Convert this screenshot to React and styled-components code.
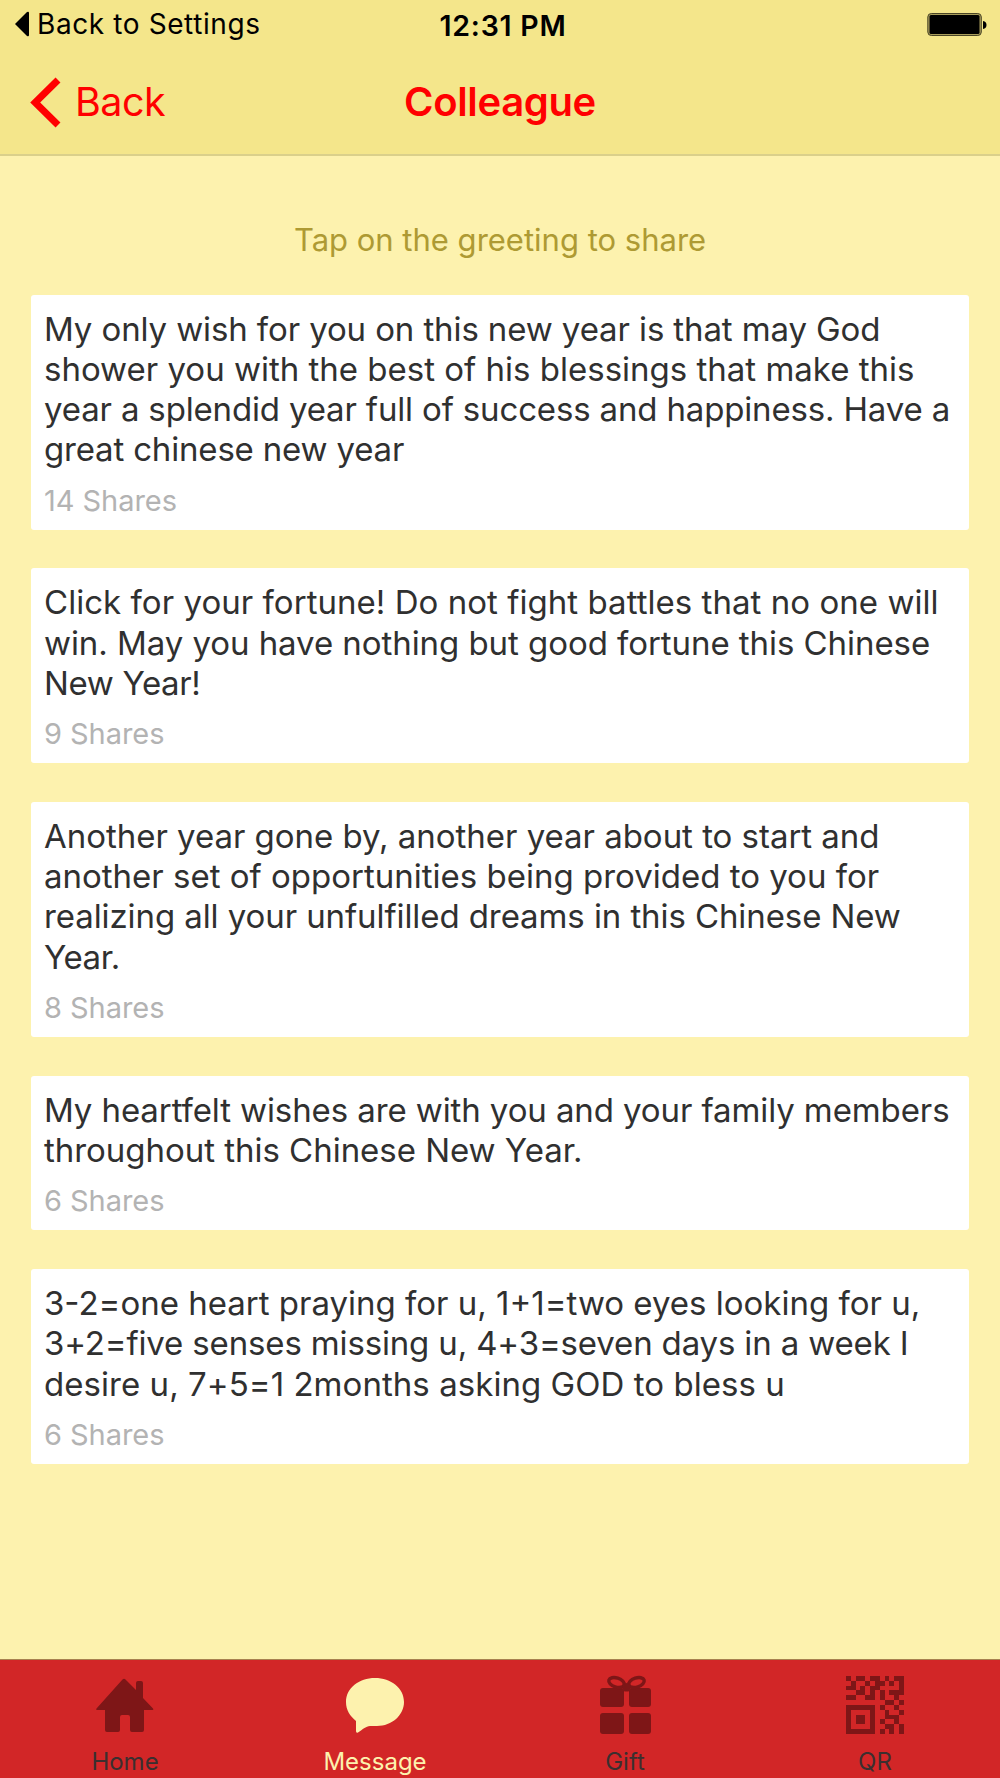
import React from 'react'
import styled, { createGlobalStyle } from 'styled-components'

const GlobalStyle = createGlobalStyle`
  * {
    box-sizing: border-box;
  }
  body {
    margin: 0;
    font-family: Inter, 'Liberation Sans', sans-serif;
    background: #fdf2ae;
  }
`

const Screen = styled.div`
  display: flex;
  flex-direction: column;
  width: 1000px;
  height: 1778px;
  overflow: hidden;
  background: #fdf2ae;
`

const Header = styled.header`
  height: 156px;
  background: #f4e68b;
  border-bottom: 2px solid #dad08b;
`

const StatusBar = styled.div`
  display: grid;
  grid-template-columns: 1fr auto 1fr;
  align-items: center;
  height: 48px;
  padding: 0 13px 0 15px;
`

const BackToApp = styled.div`
  display: flex;
  align-items: center;
  gap: 8px;
  font-size: 28px;
  letter-spacing: 0.6px;
  color: #000;
`

const Clock = styled.div`
  padding: 3px 0 0 4px;
  font-size: 28.5px;
  font-weight: 600;
  letter-spacing: 0.75px;
`

const Battery = styled.svg`
  justify-self: end;
`

const NavBar = styled.nav`
  display: grid;
  grid-template-columns: 1fr auto 1fr;
  align-items: center;
  height: 108px;
  padding: 0 30px;
  color: #ff0000;
`

const BackButton = styled.div`
  display: flex;
  align-items: center;
  gap: 14px;
  font-size: 39.5px;
  letter-spacing: -0.5px;
`

const Title = styled.h1`
  margin: 0;
  padding-bottom: 2px;
  font-size: 40px;
  font-weight: 600;
  letter-spacing: -0.35px;
`

const Content = styled.main`
  flex: 1;
  padding: 64px 31.4px 0;
`

const Hint = styled.p`
  margin: 0 0 34.7px;
  font-size: 31px;
  line-height: 40px;
  text-align: center;
  color: #ae9a33;
`

const List = styled.div`
  display: flex;
  flex-direction: column;
  gap: 38.8px;
`

const Card = styled.article`
  padding: 14px 12.6px 12.2px;
  border-radius: 3px;
  background: #fff;
`

const Line = styled.span`
  display: block;
  width: fit-content;
  font-size: 33px;
  line-height: 40.2px;
  letter-spacing: ${props => props.$tracking}px;
  white-space: nowrap;
  color: #303030;
`

const Shares = styled.div`
  margin-top: 14px;
  font-size: 29px;
  line-height: 34px;
  letter-spacing: -0.05px;
  color: #b3b3b3;
`

const TabBar = styled.footer`
  display: grid;
  grid-template-columns: repeat(4, 1fr);
  height: 119px;
  border-top: 1px solid #a8814f;
  background: #d22627;
`

const Tab = styled.div`
  display: flex;
  flex-direction: column;
  align-items: center;
  padding-top: 17px;
  font-size: 24px;
  line-height: 30px;
  color: ${props => (props.$active ? '#fdf2ae' : '#3b2f2f')};
  svg {
    margin-bottom: 10px;
    overflow: visible;
    fill: ${props => (props.$active ? '#fdf2ae' : '#7e1617')};
  }
`

// each line is [text, letter spacing]
const greetings = [
  {
    lines: [
      ['My only wish for you on this new year is that may God', -0.11],
      ['shower you with the best of his blessings that make this', 0],
      ['year a splendid year full of success and happiness. Have a', -0.16],
      ['great chinese new year', -0.18]
    ],
    shares: 14
  },
  {
    lines: [
      ['Click for your fortune! Do not fight battles that no one will', 0.04],
      ['win. May you have nothing but good fortune this Chinese', -0.06],
      ['New Year!', -0.35]
    ],
    shares: 9
  },
  {
    lines: [
      ['Another year gone by, another year about to start and', -0.03],
      ['another set of opportunities being provided to you for', 0],
      ['realizing all your unfulfilled dreams in this Chinese New', -0.09],
      ['Year.', -0.4]
    ],
    shares: 8
  },
  {
    lines: [
      ['My heartfelt wishes are with you and your family members', -0.1],
      ['throughout this Chinese New Year.', -0.03]
    ],
    shares: 6
  },
  {
    lines: [
      ['3-2=one heart praying for u, 1+1=two eyes looking for u,', 0],
      ['3+2=five senses missing u, 4+3=seven days in a week I', -0.15],
      ['desire u, 7+5=1 2months asking GOD to bless u', 0.05]
    ],
    shares: 6
  }
]

const HomeIcon = () => (
  <svg width="60" height="60" viewBox="0 0 60 60">
    <path d="M27.5 2.5Q29 1 30.5 2.5L41 13V6Q41 4 43 4H46Q48 4 48 6V21L58 31.5Q59 33 57.5 33H49V53Q49 55 47 55H37Q35 55 35 53V40Q35 38 33 38H27Q25 38 25 40V53Q25 55 23 55H12Q10 55 10 53V33H2Q0.5 33 1.5 31.5Z" />
  </svg>
)

const MessageIcon = () => (
  <svg width="60" height="60" viewBox="0 0 60 60">
    <path d="M30 1C46 1 59 11 59 25C59 38 47 49 32 49H25C21 49 17 53 13 55.5Q11 56.5 11 54V44C5 39 1 33 1 25C1 11 14 1 30 1Z" />
  </svg>
)

const GiftIcon = () => (
  <svg width="60" height="60" viewBox="0 0 60 60">
    <rect x="5" y="11" width="24" height="19" rx="3" />
    <rect x="34" y="11" width="22" height="19" rx="3" />
    <rect x="5" y="36" width="24" height="21" rx="3" />
    <rect x="34" y="36" width="22" height="21" rx="3" />
    <g fill="none" stroke="#7e1617" strokeWidth="3.4">
      <ellipse cx="21.5" cy="5.5" rx="8" ry="4.5" transform="rotate(18 21.5 5.5)" />
      <ellipse cx="41.5" cy="5.5" rx="8" ry="4.5" transform="rotate(-18 41.5 5.5)" />
    </g>
    <path d="M27 8L31.5 6L36 8L34.5 14Q31.5 15 28.5 14Z" />
  </svg>
)

const qrRows = [
  'x.xx.xx.x.xx',
  '.x..x.xx.x.x',
  'xx.x.xx....x',
  '..xx.x.x.xxx',
  'xx..xx.x..x.',
  '........xx.x',
  'xxxxxx.x..x.',
  'x....x..x..x',
  'x.xx.x..xxx.',
  'x.xx.x.x..x.',
  'x....x..xx.x',
  'xxxxxx.x.x.x'
]

const QrIcon = () => (
  <svg width="60" height="60" viewBox="0 0 60 60" shapeRendering="crispEdges">
    <g transform="translate(1 -1) scale(4.833)">
      {qrRows.map((row, y) =>
        row.split('').map((c, x) => c === 'x' && <rect key={`${x}-${y}`} x={x} y={y} width="1" height="1" />)
      )}
    </g>
  </svg>
)

const tabs = [
  { label: 'Home', Icon: HomeIcon },
  { label: 'Message', Icon: MessageIcon, active: true },
  { label: 'Gift', Icon: GiftIcon },
  { label: 'QR', Icon: QrIcon }
]

export default function App() {
  return (
    <Screen>
      <GlobalStyle />
      <Header>
        <StatusBar>
          <BackToApp>
            <svg width="14" height="26" viewBox="0 0 14 26">
              <path d="M0 13L12 1Q14 0 14 2V24Q14 26 12 25Z" />
            </svg>
            Back to Settings
          </BackToApp>
          <Clock>12:31 PM</Clock>
          <Battery width="60" height="24" viewBox="0 0 60 24">
            <rect x="0.8" y="1.5" width="53.5" height="22" rx="3.5" fill="#a89d5c" stroke="#4a4526" />
            <rect x="2.5" y="3" width="50" height="19" rx="1.5" />
            <path d="M56 9Q59.5 9.5 59.5 13T56 17Z" />
          </Battery>
        </StatusBar>
        <NavBar>
          <BackButton>
            <svg width="31" height="51" viewBox="0 0 31 51">
              <path d="M28 3L5.2 25.5L28 48" fill="none" stroke="#f00" strokeWidth="7" />
            </svg>
            Back
          </BackButton>
          <Title>Colleague</Title>
        </NavBar>
      </Header>
      <Content>
        <Hint>Tap on the greeting to share</Hint>
        <List>
          {greetings.map(({ lines, shares }) => (
            <Card key={lines[0][0]}>
              {lines.map(([text, tracking]) => (
                <Line key={text} $tracking={tracking}>
                  {text}
                </Line>
              ))}
              <Shares>{shares} Shares</Shares>
            </Card>
          ))}
        </List>
      </Content>
      <TabBar>
        {tabs.map(({ label, Icon, active }) => (
          <Tab key={label} $active={active}>
            <Icon />
            {label}
          </Tab>
        ))}
      </TabBar>
    </Screen>
  )
}
